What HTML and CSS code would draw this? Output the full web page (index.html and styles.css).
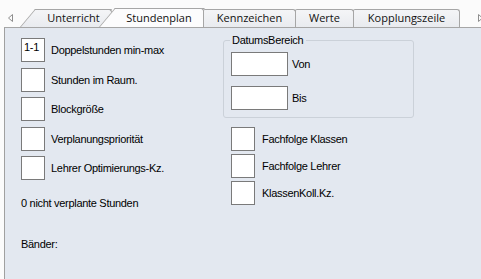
FILE: index.html
```html
<!DOCTYPE html>
<html lang="de">
<head>
  <meta charset="UTF-8">
  <title>Stundenplan</title>
  <link rel="stylesheet" href="styles.css">
</head>
<body>
  <div class="tabstrip">
    <svg class="scroll" width="5" height="8" viewBox="0 0 5 8"><polygon points="4.5,0.5 0.5,4 4.5,7.5" fill="none" stroke="#8e8e8e"/></svg>
    <div class="tab slant t-unterricht">Unterricht</div>
    <div class="tab slant active t-stundenplan">Stundenplan</div>
    <div class="tab t-kennzeichen">Kennzeichen</div>
    <div class="tab t-werte">Werte</div>
    <div class="tab t-kopplung">Kopplungszeile</div>
    <svg class="scroll right" width="5" height="8" viewBox="0 0 5 8"><polygon points="0.5,0.5 4.5,4 0.5,7.5" fill="none" stroke="#8e8e8e"/></svg>
  </div>

  <div class="panel">
    <div class="col-left">
      <div class="rows">
        <div class="row"><span class="box">1-1</span><span>Doppelstunden min-max</span></div>
        <div class="row"><span class="box"></span><span>Stunden im Raum.</span></div>
        <div class="row"><span class="box"></span><span>Blockgröße</span></div>
        <div class="row"><span class="box"></span><span>Verplanungspriorität</span></div>
        <div class="row"><span class="box"></span><span>Lehrer Optimierungs-Kz.</span></div>
      </div>
      <p class="note">0 nicht verplante Stunden</p>
      <p class="note baender">Bänder:</p>
    </div>

    <div class="col-right">
      <fieldset class="group">
        <legend>DatumsBereich</legend>
        <div class="rows date-rows">
          <div class="row date"><span class="box wide"></span><span>Von</span></div>
          <div class="row date"><span class="box wide"></span><span>Bis</span></div>
        </div>
      </fieldset>
      <div class="rows check-rows">
        <div class="row"><span class="box"></span><span>Fachfolge Klassen</span></div>
        <div class="row"><span class="box"></span><span>Fachfolge Lehrer</span></div>
        <div class="row"><span class="box"></span><span>KlassenKoll.Kz.</span></div>
      </div>
    </div>
  </div>
</body>
</html>
```

FILE: styles.css
```css
body { margin: 0; font-family: "Liberation Sans", Arial, sans-serif; font-size: 11px; letter-spacing: -0.3px; color: #000; background: #fbfbfb; overflow: hidden; }

.tabstrip { display: flex; align-items: flex-end; height: 27px; padding-left: 8px; }
.scroll { margin: 0 7px 5px 0; flex: none; }
.scroll.right { margin: 0 0 5px 18px; }

.tab { position: relative; z-index: 0; box-sizing: border-box; height: 18px; flex: none; font-family: "Open Sans", sans-serif; font-size: 11px; letter-spacing: 0; line-height: 16px; text-align: center; color: #111; background: linear-gradient(#f4f5f7, #e9ebef); border: 1px solid #a6a6a6; border-bottom: none; border-radius: 2px 3px 0 0; }
.tab.slant { background: none; border: none; padding-left: 15px; padding-top: 1px; border-radius: 0; }
.tab.slant::before { content: ""; position: absolute; left: 0; right: 15px; top: 0; bottom: 0; background: linear-gradient(#f4f5f7, #e9ebef); border-left: 1px solid #a6a6a6; border-top: 1px solid #a6a6a6; transform: skewX(-40deg); transform-origin: bottom left; z-index: -1; }
.tab.slant::after { content: ""; position: absolute; right: 0; top: 0; bottom: 0; width: 20px; background: linear-gradient(#f4f5f7, #e9ebef); border-top: 1px solid #a6a6a6; border-right: 1px solid #a6a6a6; border-top-right-radius: 3px; z-index: -1; }
.tab.active { z-index: 2; height: 19px; line-height: 17px; }
.tab.active::before, .tab.active::after { background: #fcfcfd; }

.t-unterricht { width: 92px; z-index: 1; }
.t-stundenplan { width: 105px; margin-left: -13px; }
.t-kennzeichen { width: 93px; margin-left: -1px; }
.t-werte { width: 59px; margin-left: -1px; }
.t-kopplung { width: 107px; margin-left: -1px; }

.panel { display: grid; grid-template-columns: 202px 1fr; height: 251px; margin-left: 4px; padding: 6px 0 0 16px; background: #e3e8f0; border-top: 1px solid #a6a6a6; border-left: 1px solid #a0a0a0; }

.col-left { padding-top: 4px; }
.rows { display: flex; flex-direction: column; gap: 5.5px; }
.row { display: flex; align-items: center; gap: 6px; height: 24px; }
.box { box-sizing: border-box; width: 24px; height: 24px; flex: none; padding: 2px 0 0 2px; line-height: 13px; background: #fff; border: 1px solid #7a7a7a; }
.box.wide { width: 57px; }
.row.date { gap: 4px; }

.note { margin: 17px 0 0; line-height: 13px; }
.note.baender { margin-top: 28px; }

.group { box-sizing: border-box; width: 191px; margin: 0; padding: 5px 7px 7px; border: 1px solid #cbd1d9; border-radius: 3px; }
.group legend { margin-left: -1px; padding: 0 3px 0 2px; line-height: 13px; }
.date-rows { gap: 10px; }
.check-rows { margin-top: 9px; margin-left: 8px; gap: 3px; }
.check-rows .row { gap: 7px; }
```
